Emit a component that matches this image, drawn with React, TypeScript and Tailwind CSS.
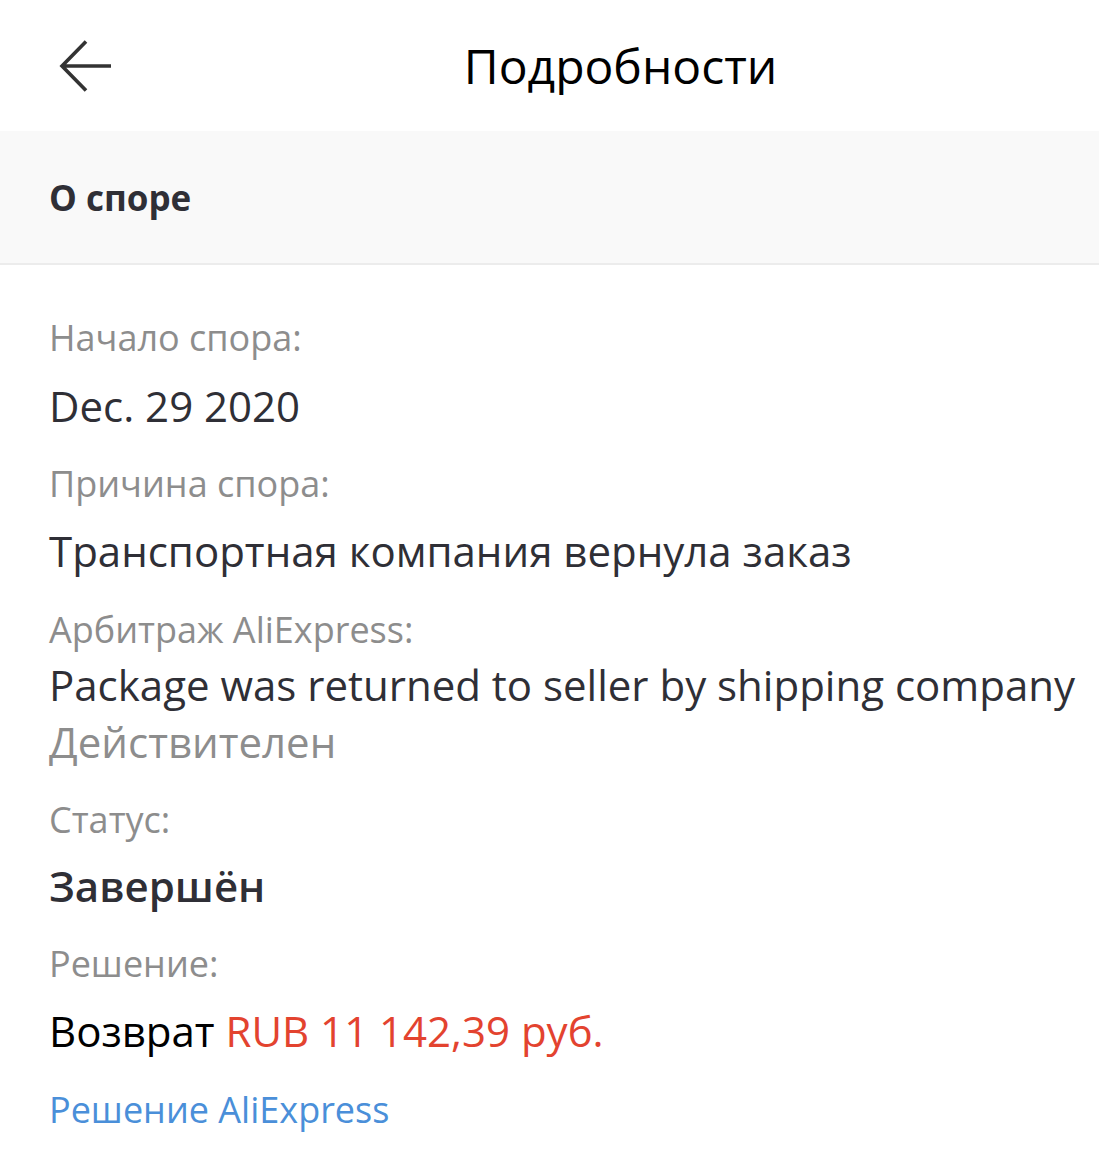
import React from "react";

const font = { fontFamily: '"Open Sans", "Noto Sans", sans-serif' };

export default function App() {
  return (
    <div className="w-[1099px] min-h-[1175px] bg-white font-['Open_Sans',_'Noto_Sans',_sans-serif]" style={font}>
      <header className="h-[131px] flex items-center relative">
        <svg className="absolute left-[58px] top-[39px]" width="56" height="54" viewBox="0 0 56 54" fill="none">
          <path d="M53 27H4M28 2.5L4 27L28 51.5" stroke="#333" strokeWidth="3.6" strokeLinecap="butt" strokeLinejoin="miter" />
        </svg>
        <div className="flex-1 pl-[142px] text-center text-[48px] leading-none text-black">Подробности</div>
      </header>
      <section className="h-[134px] bg-[#f9f9f9] border-b-2 border-[#ececec] flex items-center px-[49px]">
        <span className="text-[35px] font-bold text-[#2f2f36] pt-[2px]">О споре</span>
      </section>
      <main className="px-[49px] pt-[45px] pb-[40px]">
        <div className="leading-[56px] text-[36px] text-[#8d8d8d]">Начало спора:</div>
        <div className="mt-3 leading-[56px] text-[42px] text-[#2f2f36]">Dec. 29 2020</div>
        <div className="mt-[22px] leading-[56px] text-[36px] text-[#8d8d8d]">Причина спора:</div>
        <div className="mt-[11px] leading-[56px] text-[42px] text-[#2f2f36]">Транспортная компания вернула заказ</div>
        <div className="mt-[23px] leading-[56px] text-[36px] text-[#8d8d8d]">Арбитраж AliExpress:</div>
        <div className="mt-[-1px] leading-[56px] text-[42px] text-[#2f2f36] whitespace-nowrap">Package was returned to seller by shipping company</div>
        <div className="mt-[1px] leading-[56px] text-[42px] text-[#8d8d8d]">Действителен</div>
        <div className="mt-[22px] leading-[56px] text-[36px] text-[#8d8d8d]">Статус:</div>
        <div className="mt-[10px] leading-[56px] text-[42px] font-semibold text-[#2f2f36]">Завершён</div>
        <div className="mt-[22px] leading-[56px] text-[36px] text-[#8d8d8d]">Решение:</div>
        <div className="mt-[11px] leading-[56px] text-[42px] text-black">
          Возврат <span className="text-[#e3432f]">RUB 11 142,39 руб.</span>
        </div>
        <div className="mt-[23px] leading-[56px] text-[36px] text-[#4a8fd9]">Решение AliExpress</div>
      </main>
    </div>
  );
}
